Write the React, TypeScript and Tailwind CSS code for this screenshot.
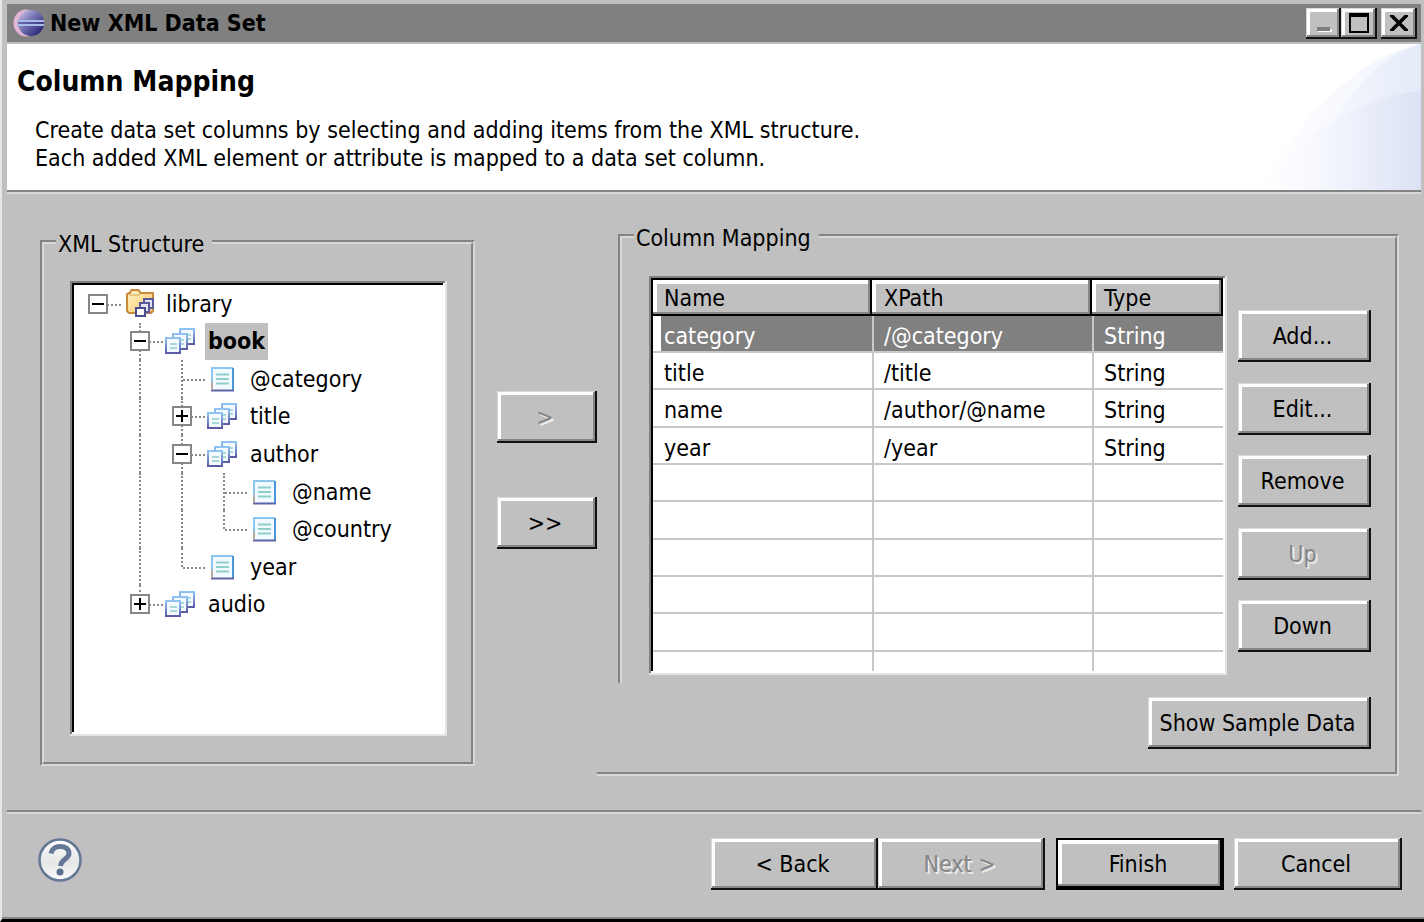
import React from 'react';
import clsx from 'clsx';

type IconKind = 'folder' | 'element' | 'attribute';

interface TreeNode {
  label: string;
  icon: IconKind;
  // one entry per ancestor column, true where its line runs on past this row
  guides: boolean[];
  toggle?: 'open' | 'closed';
  last?: boolean;
  selected?: boolean;
}

const tree: TreeNode[] = [
  { label: 'library', icon: 'folder', guides: [], toggle: 'open', last: true },
  { label: 'book', icon: 'element', guides: [false], toggle: 'open', selected: true },
  { label: '@category', icon: 'attribute', guides: [false, true] },
  { label: 'title', icon: 'element', guides: [false, true], toggle: 'closed' },
  { label: 'author', icon: 'element', guides: [false, true], toggle: 'open' },
  { label: '@name', icon: 'attribute', guides: [false, true, true] },
  { label: '@country', icon: 'attribute', guides: [false, true, true], last: true },
  { label: 'year', icon: 'attribute', guides: [false, true], last: true },
  { label: 'audio', icon: 'element', guides: [false], toggle: 'closed', last: true },
];

const columns = [
  { name: 'category', xpath: '/@category', type: 'String' },
  { name: 'title', xpath: '/title', type: 'String' },
  { name: 'name', xpath: '/author/@name', type: 'String' },
  { name: 'year', xpath: '/year', type: 'String' },
];

const emptyRows = [0, 1, 2, 3, 4];

const raised =
  'bg-[#c0c0c0] shadow-[inset_-2px_-2px_0_#111,inset_1px_1px_0_#d8d8d8,inset_-4px_-4px_0_#868686,inset_4px_4px_0_#fff]';
const sunken =
  'bg-white p-1 shadow-[inset_-2px_-2px_0_#e4e4e4,inset_2px_2px_0_#808080,inset_-4px_-4px_0_#fff,inset_4px_4px_0_#000]';
const groove = 'border-[#d8d8d8] [border-style:groove]';

interface ButtonProps {
  children: React.ReactNode;
  className?: string;
  disabled?: boolean;
}

const Button = ({ children, className, disabled }: ButtonProps) => (
  <button
    type="button"
    disabled={disabled}
    className={clsx(
      raised,
      'h-[52px] shrink-0 whitespace-nowrap pr-1',
      disabled && 'text-[#868686] [text-shadow:2px_2px_0_#ececec]',
      className
    )}
  >
    {children}
  </button>
);

const EclipseLogo = () => (
  <svg width="32" height="28" viewBox="0 0 32 28" aria-hidden="true">
    <defs>
      <linearGradient id="moon" x1="0" y1="0" x2="1" y2="1">
        <stop offset="0" stopColor="#d8d0ea" />
        <stop offset="0.4" stopColor="#7d7aba" />
        <stop offset="1" stopColor="#101060" />
      </linearGradient>
    </defs>
    <ellipse cx="13" cy="14" rx="12.5" ry="13.5" fill="#e3b4d3" />
    <circle cx="18" cy="14" r="13" fill="url(#moon)" />
    <path d="M4 12h27M4 16h27" stroke="#a9bce6" strokeWidth="1.8" />
    <path d="M5 14h26" stroke="#3c3c8c" strokeWidth="1" />
  </svg>
);

const FolderIcon = () => (
  <svg width="32" height="32" viewBox="0 0 32 32" aria-hidden="true">
    <defs>
      <linearGradient id="folder" x1="0" y1="0" x2="1" y2="1">
        <stop offset="0" stopColor="#fff6cf" />
        <stop offset="1" stopColor="#f6c35e" />
      </linearGradient>
    </defs>
    <path
      d="M4 23V6l2-1h1l1.500-3h7l2 3h12.500v18l-2 2H6z"
      fill="url(#folder)"
      stroke="#c98a3c"
      strokeWidth="2"
    />
    <path d="M6 7h11" fill="none" stroke="#d9a458" strokeWidth="1" />
    <rect x="21" y="11" width="9" height="9" fill="#dfe3f5" stroke="#5a5a9c" strokeWidth="2" />
    <rect x="17" y="15" width="9" height="9" fill="#dfe3f5" stroke="#5a5a9c" strokeWidth="2" />
    <rect x="13" y="20" width="9" height="8" fill="#fff" stroke="#4b4b90" strokeWidth="2" />
  </svg>
);

const ElementIcon = () => (
  <svg width="32" height="32" viewBox="0 0 32 32" aria-hidden="true">
    <defs>
      <linearGradient id="sheet" x1="0" y1="0" x2="0" y2="1">
        <stop offset="0" stopColor="#8fc4f4" />
        <stop offset="1" stopColor="#5b5ba4" />
      </linearGradient>
    </defs>
    {[
      [15, 4],
      [8, 9],
      [1, 13],
    ].map(([x, y]) => (
      <g key={x}>
        <rect x={x} y={y} width="14" height="15" fill="#f3f9ff" stroke="url(#sheet)" strokeWidth="2" />
        <path d={`M${x + 4} ${y + 6}h7M${x + 4} ${y + 10}h7`} stroke="#8fcfc9" strokeWidth="1.600" />
      </g>
    ))}
  </svg>
);

const AttributeIcon = () => (
  <svg width="32" height="32" viewBox="0 0 32 32" aria-hidden="true">
    <rect x="5" y="5" width="21" height="22" fill="#f1faff" />
    <path d="M5 28V5h21" fill="none" stroke="#8cc6ee" strokeWidth="2" />
    <path d="M26 5v23" stroke="#4a94d8" strokeWidth="2" />
    <path d="M4 27.500h23" stroke="#5e64a8" strokeWidth="2" />
    <path d="M5 19v8" stroke="#b8a8a0" strokeWidth="2" />
    <path d="M9 11.500h13M9 16h13M9 20.500h13" stroke="#8fcfc9" strokeWidth="2" />
  </svg>
);

const icons = {
  folder: FolderIcon,
  element: ElementIcon,
  attribute: AttributeIcon,
};

const dots = 'absolute border-dotted border-[#8a8a8a]';

const TreeRow = ({ node }: { node: TreeNode }) => {
  const Icon = icons[node.icon];
  const isRoot = node.guides.length === 0;

  return (
    <li className="flex items-center">
      {node.guides.map((line, i) => (
        <span key={i} className="relative w-[42px] self-stretch">
          {line && <span className={clsx(dots, 'left-[18px] top-0 h-full border-l-2')} />}
        </span>
      ))}
      <span className="relative flex w-[42px] items-center self-stretch pl-[9px]">
        {!isRoot && (
          <span
            className={clsx(dots, 'left-[18px] top-0 border-l-2', node.last ? 'h-1/2' : 'h-full')}
          />
        )}
        <span className={clsx(dots, 'left-[20px] right-0 top-1/2 border-t-2')} />
        {node.toggle && (
          <button
            type="button"
            aria-label={node.label}
            aria-expanded={node.toggle === 'open'}
            className="relative flex size-5 items-center justify-center border-2 border-[#868686] bg-white"
          >
            <svg width="12" height="12" viewBox="0 0 12 12" aria-hidden="true">
              <path
                d={node.toggle === 'open' ? 'M0 6h12' : 'M0 6h12M6 0v12'}
                stroke="#000"
                strokeWidth="2"
              />
            </svg>
          </button>
        )}
      </span>
      <span className="w-[42px] pl-0.5">
        <Icon />
      </span>
      <span
        className={clsx(
          'flex items-center self-stretch px-[3px]',
          node.selected && 'bg-[#c0c0c0] font-bold'
        )}
      >
        {node.label}
      </span>
    </li>
  );
};

const TitleBar = () => (
  <div className="flex h-[38px] items-center bg-[#808080] pl-[6px] pr-1">
    <EclipseLogo />
    <h1 className="ml-[5px] flex-1 font-bold">New XML Data Set</h1>
    <button
      type="button"
      disabled
      aria-label="Minimize"
      className={clsx(raised, 'flex h-[31px] w-[35px] items-center justify-center')}
    >
      <svg width="18" height="18" viewBox="0 0 18 18" aria-hidden="true">
        <path d="M3 17h14" stroke="#fff" strokeWidth="3" />
        <path d="M2 15h13" stroke="#808080" strokeWidth="4" />
      </svg>
    </button>
    <button
      type="button"
      aria-label="Maximize"
      className={clsx(raised, 'flex h-[31px] w-[36px] items-center justify-center')}
    >
      <svg width="20" height="20" viewBox="0 0 20 20" aria-hidden="true">
        <path d="M1 2v17h18V2z" fill="none" stroke="#000" strokeWidth="2" />
        <path d="M0 2h20" stroke="#000" strokeWidth="4" />
      </svg>
    </button>
    <button
      type="button"
      aria-label="Close"
      className={clsx(raised, 'ml-1 flex h-[31px] w-[36px] items-center justify-center')}
    >
      <svg width="18" height="16" viewBox="0 0 18 16" aria-hidden="true">
        <path d="M0 1h4M14 1h4M0 15h4M14 15h4" stroke="#000" strokeWidth="2" />
        <path d="M2 1l14 14M16 1L2 15" fill="none" stroke="#000" strokeWidth="3.500" />
      </svg>
    </button>
  </div>
);

const BannerArt = () => (
  <svg
    className="absolute right-0 top-0 h-full w-[164px]"
    viewBox="0 0 164 146"
    preserveAspectRatio="none"
    aria-hidden="true"
  >
    <defs>
      <linearGradient id="glow" x1="0" x2="1">
        <stop offset="0" stopColor="#fff" />
        <stop offset="1" stopColor="#f0f4fd" />
      </linearGradient>
      <linearGradient id="arc" x1="0" x2="1">
        <stop offset="0" stopColor="#f8faff" />
        <stop offset="1" stopColor="#e4ebf8" />
      </linearGradient>
      <linearGradient id="hill" x1="0" x2="1">
        <stop offset="0" stopColor="#fff" />
        <stop offset="0.35" stopColor="#f7f9fe" />
        <stop offset="1" stopColor="#dce2f5" />
      </linearGradient>
    </defs>
    <path d="M0 146C40 80 95 15 164 0V146z" fill="url(#glow)" />
    <path d="M48 146C66 90 104 15 164 0V146z" fill="url(#arc)" />
    <path d="M0 146C45 92 100 52 164 47V146z" fill="url(#hill)" />
  </svg>
);

const HelpIcon = () => (
  <svg width="44" height="44" viewBox="0 0 44 44" aria-hidden="true">
    <defs>
      <linearGradient id="disc" x1="0" y1="0" x2="0" y2="1">
        <stop offset="0" stopColor="#fff" />
        <stop offset="0.55" stopColor="#e6e6e6" />
        <stop offset="1" stopColor="#fafafa" />
      </linearGradient>
    </defs>
    <circle cx="22" cy="22" r="20.500" fill="url(#disc)" stroke="#647796" strokeWidth="2.500" />
    <path
      d="M13 15.500c1-5 5-7 9-7 5.500 0 9 2.500 9 7 0 5.500-8 5.500-8.500 12.500"
      fill="none"
      stroke="#647796"
      strokeWidth="5"
    />
    <circle cx="22" cy="34" r="3.500" fill="#5b6f90" />
  </svg>
);

const th =
  'h-9 border-b-2 border-r-2 border-black pt-0.5 text-left font-normal shadow-[inset_-2px_-2px_0_#868686,inset_4px_4px_0_#fff]';
const td = 'border-b-2 border-[#c8c8c8] pt-1';

const MappingTable = () => (
  <div className={clsx(sunken, 'h-[399px] flex-1')}>
    <table className="h-full w-full table-fixed border-separate border-spacing-0">
      <colgroup>
        <col className="w-[219px]" />
        <col className="w-[220px]" />
        <col />
      </colgroup>
      <thead className="bg-[#c0c0c0]">
        <tr>
          <th className={clsx(th, 'pl-[11px]')}>Name</th>
          <th className={clsx(th, 'pl-3')}>XPath</th>
          <th className={clsx(th, 'pl-3')}>Type</th>
        </tr>
      </thead>
      <tbody>
        {columns.map((col, i) => (
          <tr
            key={col.name}
            className={clsx('h-[37px] nth-[3n]:h-[38px]', i === 0 && 'bg-[#808080] text-white')}
          >
            <td className={clsx(td, 'pl-[11px]', i === 0 && 'shadow-[inset_8px_0_0_#fff]')}>{col.name}</td>
            <td className={clsx(td, 'border-l-2 pl-[10px]')}>{col.xpath}</td>
            <td className={clsx(td, 'border-l-2 pl-[10px]')}>{col.type}</td>
          </tr>
        ))}
        {emptyRows.map((row) => (
          <tr key={row} className="h-[37px] nth-[3n]:h-[38px]">
            <td className={td} />
            <td className={clsx(td, 'border-l-2')} />
            <td className={clsx(td, 'border-l-2')} />
          </tr>
        ))}
        <tr>
          <td />
          <td className="border-l-2 border-[#c8c8c8]" />
          <td className="border-l-2 border-[#c8c8c8]" />
        </tr>
      </tbody>
    </table>
  </div>
);

const App = () => {
  return (
    <div className="flex min-h-screen flex-col border-b-[3px] border-l-2 border-b-black border-l-[#e6e6e6] bg-[#c0c0c0] pl-[5px] pr-[3px] pt-1 font-['DejaVu_Sans_Condensed','DejaVu_Sans',sans-serif] text-[23px] leading-6 text-black shadow-[inset_0_-2px_0_#868686]">
      <TitleBar />

      <header className={clsx(groove, 'relative mt-0.5 border-b-4 bg-white pb-[18px] pl-[10px] pt-[22px]')}>
        <BannerArt />
        <h2 className="relative text-[28px] font-bold leading-8">Column Mapping</h2>
        <p className="relative mt-[18px] pl-[18px] leading-7">
          Create data set columns by selecting and adding items from the XML structure.
          <br />
          Each added XML element or attribute is mapped to a data set column.
        </p>
      </header>

      <main className="grid flex-1 grid-cols-[435fr_122px_802fr] items-start pb-8 pl-[33px] pr-[22px] pt-7">
        <fieldset className={clsx(groove, 'mt-[6px] min-w-0 border-4 px-3 pb-[26px]')}>
          <legend className="px-0.5 pr-2 pt-1">XML Structure</legend>
          <div className="pl-[14px] pr-3 pt-[25px]">
            <div className={clsx(sunken, 'h-[455px]')}>
              <ul className="grid h-[338px] auto-rows-fr pl-[5px]">
                {tree.map((node) => (
                  <TreeRow key={node.label} node={node} />
                ))}
              </ul>
            </div>
          </div>
        </fieldset>

        <div className="ml-[22px] mt-[169px] flex flex-col gap-[54px]">
          <Button disabled>&gt;</Button>
          <Button>&gt;&gt;</Button>
        </div>

        <div className="min-w-0">
          <fieldset className={clsx(groove, 'ml-[21px] min-w-0 border-4 border-b-0 px-3 pb-2')}>
            <legend className="px-0.5 pr-2 pt-1">Column Mapping</legend>
            <div className="flex gap-[11px] pl-[15px] pr-3 pt-[26px]">
              <MappingTable />
              <div className="mb-[23px] mt-[34px] flex w-[133px] flex-col justify-between">
                <Button>Add...</Button>
                <Button>Edit...</Button>
                <Button>Remove</Button>
                <Button disabled>Up</Button>
                <Button>Down</Button>
              </div>
            </div>
          </fieldset>
          <div className={clsx(groove, 'flex justify-end border-b-4 border-r-4 pb-[23px] pr-6 pt-[14px]')}>
            <Button className="w-[223px]">Show Sample Data</Button>
          </div>
        </div>
      </main>

      <footer className={clsx(groove, 'flex items-start border-t-4 pb-[29px] pl-[31px] pr-[19px] pt-6')}>
        <button type="button" aria-label="Help">
          <HelpIcon />
        </button>
        <div className="ml-auto flex">
          <Button className="w-[167px]">&lt; Back</Button>
          <Button className="w-[167px]" disabled>
            Next &gt;
          </Button>
          <div className="ml-[11px] flex w-[168px] bg-black p-0.5">
            <button
              type="button"
              className="flex-1 bg-[#c0c0c0] pr-1 shadow-[inset_-2px_-2px_0_#000,inset_-4px_-4px_0_#868686,inset_4px_4px_0_#fff]"
            >
              Finish
            </button>
          </div>
          <Button className="ml-[10px] w-[168px]">Cancel</Button>
        </div>
      </footer>
    </div>
  );
};

export default App;
